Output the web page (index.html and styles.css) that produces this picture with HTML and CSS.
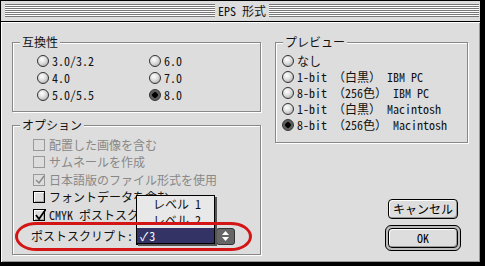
FILE: index.html
```html
<!DOCTYPE html>
<html lang="ja">
<head>
    <meta charset="UTF-8">
    <meta name="viewport" content="width=device-width, initial-scale=1.0">
    <title>EPS 形式</title>
    <link rel="stylesheet" href="styles.css">
</head>
<body>
    <div class="window">
        <div class="titlebar">
            <span class="stripes"></span>
            <span class="titlebar__text">EPS 形式</span>
            <span class="stripes"></span>
        </div>
        <div class="content">
            <div class="col col--left">
                <section class="group group--compat">
                    <div class="group__title">互換性</div>
                    <div class="radio-grid">
                        <div class="radio"><span class="radio__btn"></span>3.0/3.2</div>
                        <div class="radio"><span class="radio__btn"></span>6.0</div>
                        <div class="radio"><span class="radio__btn"></span>4.0</div>
                        <div class="radio"><span class="radio__btn"></span>7.0</div>
                        <div class="radio"><span class="radio__btn"></span>5.0/5.5</div>
                        <div class="radio"><span class="radio__btn radio__btn--on"></span>8.0</div>
                    </div>
                </section>
                <section class="group group--options">
                    <div class="group__title">オプション</div>
                    <div class="checks">
                        <div class="check check--off"><span class="check__box"></span>配置した画像を含む</div>
                        <div class="check check--off"><span class="check__box"></span>サムネールを作成</div>
                        <div class="check check--off"><span class="check__box">
                            <svg viewBox="0 0 12 12" width="12" height="12"><path d="M2 6 L5 9 L10 2" fill="none" stroke="#888" stroke-width="1.4"/></svg>
                        </span>日本語版のファイル形式を使用</div>
                        <div class="check"><span class="check__box"></span>フォントデータを含む</div>
                        <div class="check"><span class="check__box">
                            <svg viewBox="0 0 12 12" width="12" height="12"><path d="M2 6 L5 10 L12 0" fill="none" stroke="#000" stroke-width="1.8"/></svg>
                        </span>CMYK ポストスクリプト</div>
                    </div>
                    <div class="popup-row">
                        <span class="popup-row__label">ポストスクリプト:</span>
                        <div class="popup">
                            <div class="popup__field">3</div>
                            <div class="popup__arrows">
                                <svg viewBox="0 0 9 12" width="9" height="12"><path d="M4.5 1 L8 5 L1 5 Z M4.5 11 L8 7 L1 7 Z" fill="#fff"/></svg>
                            </div>
                            <ul class="menu">
                                <li class="menu__item">レベル 1</li>
                                <li class="menu__item">レベル 2</li>
                                <li class="menu__item menu__item--active"><span class="menu__check">✓</span>3</li>
                            </ul>
                        </div>
                    </div>
                </section>
            </div>
            <div class="col col--right">
                <section class="group group--preview">
                    <div class="group__title">プレビュー</div>
                    <div class="radio-list">
                        <div class="radio"><span class="radio__btn"></span>なし</div>
                        <div class="radio"><span class="radio__btn"></span>1-bit （白黒） IBM PC</div>
                        <div class="radio"><span class="radio__btn"></span>8-bit （256色） IBM PC</div>
                        <div class="radio"><span class="radio__btn"></span>1-bit （白黒） Macintosh</div>
                        <div class="radio"><span class="radio__btn radio__btn--on"></span>8-bit （256色） Macintosh</div>
                    </div>
                </section>
                <div class="buttons">
                    <button class="btn">キャンセル</button>
                    <div class="btn-default"><button class="btn btn--ok">OK</button></div>
                </div>
            </div>
            <div class="mark"></div>
        </div>
    </div>
</body>
</html>
```

FILE: styles.css
```css
* { margin: 0; padding: 0; box-sizing: border-box; }
html, body { background: #000; }
body {
    font: 12px/14px "Noto Sans Mono CJK JP", "Noto Sans CJK JP", sans-serif;
    color: #111;
}
ul { list-style: none; }

.window {
    width: 481px;
    height: 263px;
    border: 1px solid #000;
    background: #ddd;
}
.titlebar {
    height: 21px;
    display: flex;
    align-items: flex-start;
    padding: 3px 1px 0 4px;
    border-bottom: 1px solid #000;
}
.stripes {
    flex: 1;
    height: 13px;
    background: repeating-linear-gradient(#777 0 1px, #fff 1px 2px);
}
.titlebar__text {
    padding: 0 3px;
    margin-top: -2px;
    line-height: 17px;
}

.content {
    position: relative;
    height: 240px;
    display: flex;
    gap: 14px;
    padding: 20px 0 0 11px;
    box-shadow: inset 1px 1px 0 #fff, inset -1px -1px 0 #999;
}
.col {
    display: flex;
    flex-direction: column;
}
.col--left { width: 249px; }
.col--right { width: 193px; }

.group {
    border: 1px solid #888;
    box-shadow: inset 1px 1px 0 #fff, 1px 1px 0 #fff;
}
.group__title {
    display: table;
    margin: -8px 0 0 7px;
    padding: 0 2px;
    background: #ddd;
}
.group--compat { height: 70px; }
.group--options { height: 130px; margin-top: 13px; }
.group--preview { height: 101px; }

.radio-grid {
    display: grid;
    grid-template-columns: 112px 112px;
    grid-auto-rows: 17px;
    margin-top: 3px;
    padding-left: 24px;
}
.radio-list {
    display: grid;
    grid-auto-rows: 16px;
    margin-top: 4px;
    padding-left: 6px;
}
.radio {
    display: flex;
    align-items: center;
    gap: 3px;
    white-space: nowrap;
}
.radio__btn {
    width: 12px;
    height: 12px;
    flex: none;
    border-radius: 50%;
    border: 1px solid #333;
    background: radial-gradient(circle at 40% 35%, #fff 0, #ddd 45%, #999 100%);
}
.radio__btn--on {
    background: radial-gradient(circle, #000 0 2.5px, #555 3px, #777 100%);
}

.checks {
    margin-top: 4px;
    padding-left: 20px;
}
.check {
    height: 17.5px;
    display: flex;
    align-items: center;
    gap: 4px;
    white-space: nowrap;
}
.check__box {
    position: relative;
    width: 12px;
    height: 12px;
    flex: none;
    border: 1px solid #000;
    background: #ddd;
    box-shadow: inset 1px 1px 0 #fff, inset -1px -1px 0 #aaa;
}
.check__box svg {
    position: absolute;
    left: 0;
    top: -1px;
}
.check--off { color: #888; }
.check--off .check__box {
    border-color: #999;
    box-shadow: none;
}

.popup-row {
    display: flex;
    align-items: center;
    gap: 3px;
    margin: 4px 0 0 18px;
    height: 17px;
}
.popup {
    position: relative;
    width: 99px;
    height: 17px;
    display: flex;
}
.popup__field {
    flex: 1;
    border: 1px solid #000;
    background: #fff;
    padding-left: 14px;
}
.popup__arrows {
    width: 19px;
    display: flex;
    align-items: center;
    justify-content: center;
    background: #666;
    border: 1px solid #333;
    border-radius: 3px;
    margin-left: 1px;
}
.menu {
    position: absolute;
    left: 0;
    top: -33px;
    width: 79px;
    border: 1px solid #000;
    background: #e8e8e8;
    box-shadow: 2px 2px 0 #555;
}
.menu__item {
    height: 16px;
    line-height: 16px;
    padding-left: 16px;
}
.menu__item--active {
    height: 15px;
    background: #333366;
    color: #fff;
    padding-left: 14px;
}
.menu__check {
    margin-left: -11px;
    margin-right: 1px;
}

.buttons {
    align-self: flex-end;
    margin: 56px 7px 0 0;
    width: 76px;
    display: flex;
    flex-direction: column;
    align-items: center;
    gap: 6px;
}
.btn {
    width: 70px;
    height: 20px;
    font: inherit;
    color: #000;
    border: 1px solid #000;
    border-radius: 4px;
    background: #ddd;
    box-shadow: inset 1px 1px 0 #fff, inset -1px -1px 0 #999;
}
.btn-default {
    width: 76px;
    height: 26px;
    padding: 2px;
    border: 1px solid #000;
    border-radius: 6px;
    background: #bbb;
}
.btn--ok {
    width: 70px;
    height: 20px;
}

.mark {
    position: absolute;
    left: 14px;
    top: 200px;
    width: 237px;
    height: 29px;
    border: 3px solid #d41515;
    border-radius: 22px / 15px;
}
```
